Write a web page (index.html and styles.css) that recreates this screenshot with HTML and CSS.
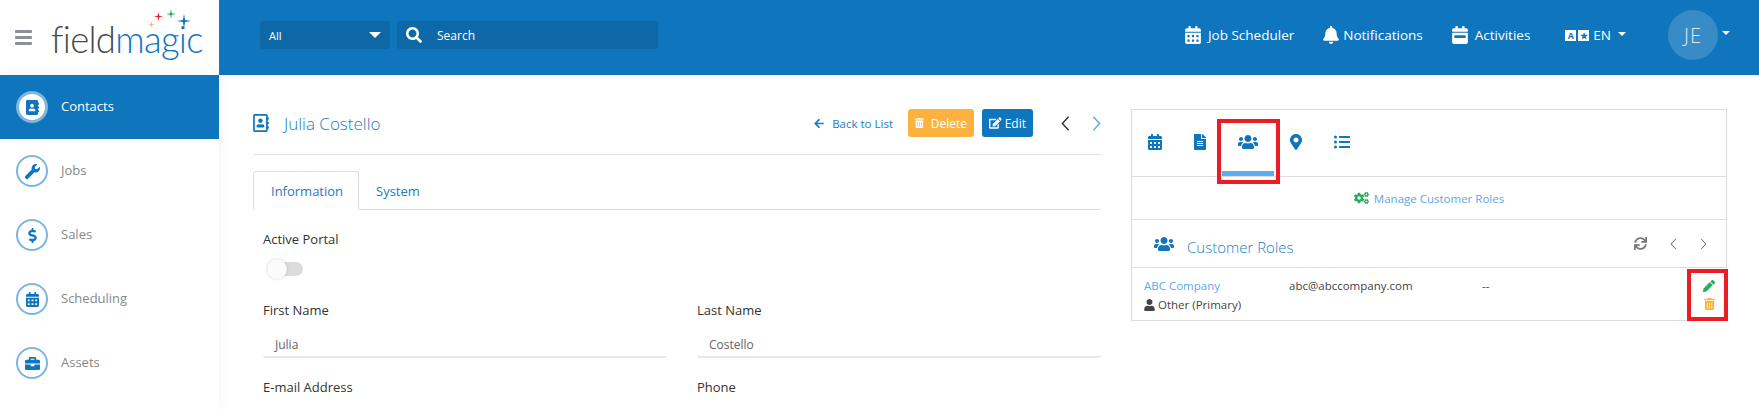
FILE: index.html
```html
<!DOCTYPE html>
<html lang="en">
<head>
<meta charset="utf-8">
<title>Julia Costello - Contacts</title>
<link rel="stylesheet" href="styles.css">
</head>
<body>
<svg class="defs" aria-hidden="true">
<symbol id="i-cal" viewBox="0 0 448 512"><path d="M0 464c0 26.5 21.5 48 48 48h352c26.5 0 48-21.5 48-48V192H0v272zm320-196c0-6.6 5.4-12 12-12h40c6.6 0 12 5.4 12 12v40c0 6.6-5.4 12-12 12h-40c-6.6 0-12-5.4-12-12v-40zm0 128c0-6.6 5.4-12 12-12h40c6.6 0 12 5.4 12 12v40c0 6.6-5.4 12-12 12h-40c-6.6 0-12-5.4-12-12v-40zM192 268c0-6.6 5.4-12 12-12h40c6.6 0 12 5.4 12 12v40c0 6.6-5.4 12-12 12h-40c-6.6 0-12-5.4-12-12v-40zm0 128c0-6.6 5.4-12 12-12h40c6.6 0 12 5.4 12 12v40c0 6.6-5.4 12-12 12h-40c-6.6 0-12-5.4-12-12v-40zM64 268c0-6.6 5.4-12 12-12h40c6.6 0 12 5.4 12 12v40c0 6.6-5.4 12-12 12H76c-6.6 0-12-5.4-12-12v-40zm0 128c0-6.6 5.4-12 12-12h40c6.6 0 12 5.4 12 12v40c0 6.6-5.4 12-12 12H76c-6.6 0-12-5.4-12-12v-40zM400 64h-48V16c0-8.8-7.2-16-16-16h-32c-8.8 0-16 7.2-16 16v48H160V16c0-8.8-7.2-16-16-16h-32c-8.8 0-16 7.2-16 16v48H48C21.5 64 0 85.5 0 112v48h448v-48c0-26.5-21.5-48-48-48z"/></symbol>
<symbol id="i-book" viewBox="0 0 448 512"><path d="M436 160c6.6 0 12-5.4 12-12v-40c0-6.6-5.4-12-12-12h-20V48c0-26.5-21.5-48-48-48H48C21.5 0 0 21.5 0 48v416c0 26.5 21.5 48 48 48h320c26.5 0 48-21.5 48-48v-48h20c6.6 0 12-5.4 12-12v-40c0-6.6-5.4-12-12-12h-20v-64h20c6.6 0 12-5.4 12-12v-40c0-6.6-5.4-12-12-12h-20v-64h20zm-228-32c35.3 0 64 28.7 64 64s-28.7 64-64 64-64-28.7-64-64 28.7-64 64-64zm112 236.8c0 10.6-10 19.2-22.4 19.2H118.4C106 384 96 375.4 96 364.8v-19.2c0-31.8 30.1-57.6 67.2-57.6h5c12.3 5.1 25.7 8 39.8 8s27.6-2.9 39.8-8h5c37.1 0 67.2 25.8 67.2 57.6v19.2z"/></symbol>
<symbol id="i-book-o" viewBox="0 0 448 512"><path d="M436 160c6.6 0 12-5.4 12-12v-40c0-6.6-5.4-12-12-12h-20V48c0-26.5-21.5-48-48-48H48C21.5 0 0 21.5 0 48v416c0 26.5 21.5 48 48 48h320c26.5 0 48-21.5 48-48v-48h20c6.6 0 12-5.4 12-12v-40c0-6.6-5.4-12-12-12h-20v-64h20c6.6 0 12-5.4 12-12v-40c0-6.6-5.4-12-12-12h-20v-64h20zM368 464H48V48h320v416zM208 256c35.3 0 64-28.7 64-64s-28.7-64-64-64-64 28.7-64 64 28.7 64 64 64zm-89.6 128h179.2c12.4 0 22.4-8.6 22.4-19.2v-19.2c0-31.8-30.1-57.6-67.2-57.6-10.8 0-18.7 8-44.8 8-26.9 0-33.4-8-44.8-8-37.1 0-67.2 25.8-67.2 57.6v19.2c0 10.6 10 19.2 22.4 19.2z"/></symbol>
<symbol id="i-wrench" viewBox="0 0 512 512"><path d="M507.73 109.1c-2.24-9.03-13.54-12.09-20.12-5.51l-74.36 74.36-67.88-11.31-11.31-67.88 74.36-74.36c6.62-6.62 3.43-17.9-5.66-20.16-47.38-11.74-99.55.91-136.58 37.93-39.64 39.64-50.55 97.1-34.05 147.2L18.74 402.76c-24.99 24.99-24.99 65.51 0 90.5 24.99 24.99 65.51 24.99 90.5 0l213.21-213.21c50.12 16.71 107.47 5.68 147.37-34.22 37.07-37.07 49.7-89.32 37.91-136.73z"/></symbol>
<symbol id="i-dollar" viewBox="0 0 288 512"><path d="M209.2 233.4l-108-31.6C88.7 198.2 80 186.5 80 173.5c0-16.3 13.2-29.5 29.5-29.5h66.3c12.2 0 24.2 3.7 34.2 10.5 6.1 4.1 14.3 3.1 19.5-2l34.8-34c7.1-6.9 6.1-18.4-1.8-24.5C238 74.8 207.4 64.1 176 64V16c0-8.8-7.2-16-16-16h-32c-8.8 0-16 7.2-16 16v48h-2.5C45.8 64-5.4 118.7.5 183.6c4.2 46.1 39.4 83.6 83.8 96.6l102.5 30c12.5 3.7 21.2 15.3 21.2 28.3 0 16.3-13.2 29.5-29.5 29.5h-66.3C100 368 88 364.3 78 357.5c-6.1-4.1-14.3-3.1-19.5 2l-34.8 34c-7.1 6.9-6.1 18.4 1.8 24.5 24.5 19.2 55.1 29.9 86.5 30v48c0 8.8 7.2 16 16 16h32c8.8 0 16-7.2 16-16v-48.2c46.6-.9 90.3-28.6 105.7-72.7 21.5-61.6-14.6-124.8-72.5-141.7z"/></symbol>
<symbol id="i-case" viewBox="0 0 512 512"><path d="M320 336c0 8.84-7.16 16-16 16h-96c-8.84 0-16-7.16-16-16v-48H0v144c0 25.6 22.4 48 48 48h416c25.6 0 48-22.4 48-48V288H320v48zm144-208h-80V80c0-25.6-22.4-48-48-48H176c-25.6 0-48 22.4-48 48v48H48c-25.6 0-48 22.4-48 48v80h512v-80c0-25.6-22.4-48-48-48zm-144 0H192V96h128v32z"/></symbol>
<symbol id="i-search" viewBox="0 0 512 512"><path d="M505 442.7L405.3 343c-4.5-4.5-10.6-7-17-7H372c27.6-35.3 44-79.7 44-128C416 93.1 322.9 0 208 0S0 93.1 0 208s93.1 208 208 208c48.3 0 92.7-16.4 128-44v16.3c0 6.4 2.5 12.5 7 17l99.7 99.7c9.4 9.4 24.6 9.4 33.9 0l28.3-28.3c9.4-9.4 9.4-24.6.1-34zM208 336c-70.7 0-128-57.2-128-128 0-70.7 57.2-128 128-128 70.7 0 128 57.2 128 128 0 70.7-57.2 128-128 128z"/></symbol>
<symbol id="i-bell" viewBox="0 0 448 512"><path d="M224 512c35.32 0 63.97-28.65 63.97-64H160.03c0 35.35 28.65 64 63.97 64zm215.39-149.71c-19.32-20.76-55.47-51.99-55.47-154.29 0-77.7-54.48-139.9-127.94-155.16V32c0-17.67-14.32-32-31.98-32s-31.98 14.33-31.98 32v20.84C118.56 68.1 64.08 130.3 64.08 208c0 102.3-36.15 133.53-55.47 154.29-6 6.45-8.66 14.16-8.61 21.71.11 16.4 12.98 32 32.1 32h383.8c19.12 0 32-15.6 32.1-32 .05-7.55-2.61-15.27-8.61-21.71z"/></symbol>
<symbol id="i-week" viewBox="0 0 448 512"><path fill-rule="evenodd" d="M12 192h424c6.6 0 12 5.4 12 12v260c0 26.5-21.5 48-48 48H48c-26.5 0-48-21.5-48-48V204c0-6.6 5.4-12 12-12zm52 72v80h320v-80H64zM448 148v-36c0-26.5-21.5-48-48-48h-48V12c0-6.6-5.4-12-12-12h-40c-6.6 0-12 5.4-12 12v52H160V12c0-6.6-5.4-12-12-12h-40c-6.6 0-12 5.4-12 12v52H48C21.5 64 0 85.5 0 112v36c0 6.6 5.4 12 12 12h424c6.6 0 12-5.4 12-12z"/></symbol>
<symbol id="i-file" viewBox="0 0 384 512"><path d="M224 136V0H24C10.7 0 0 10.7 0 24v464c0 13.3 10.7 24 24 24h336c13.3 0 24-10.7 24-24V160H248c-13.2 0-24-10.8-24-24zm64 236c0 6.6-5.4 12-12 12H108c-6.6 0-12-5.4-12-12v-8c0-6.6 5.4-12 12-12h168c6.6 0 12 5.4 12 12v8zm0-64c0 6.6-5.4 12-12 12H108c-6.6 0-12-5.4-12-12v-8c0-6.6 5.4-12 12-12h168c6.6 0 12 5.4 12 12v8zm0-72v8c0 6.6-5.4 12-12 12H108c-6.6 0-12-5.4-12-12v-8c0-6.6 5.4-12 12-12h168c6.6 0 12 5.4 12 12zm96-114.1v6.1H256V0h6.1c6.4 0 12.5 2.5 17 7l97.9 98c4.5 4.5 7 10.6 7 16.9z"/></symbol>
<symbol id="i-users" viewBox="0 0 640 512"><path d="M96 224c35.3 0 64-28.7 64-64s-28.7-64-64-64-64 28.7-64 64 28.7 64 64 64zm448 0c35.3 0 64-28.7 64-64s-28.7-64-64-64-64 28.7-64 64 28.7 64 64 64zm32 32h-64c-17.6 0-33.5 7.1-45.1 18.6 40.3 22.1 68.9 62 75.1 109.4h66c17.7 0 32-14.3 32-32v-32c0-35.3-28.7-64-64-64zm-256 0c61.9 0 112-50.1 112-112S381.9 32 320 32 208 82.1 208 144s50.1 112 112 112zm76.8 32h-8.3c-20.8 10-43.9 16-68.5 16s-47.6-6-68.5-16h-8.3C179.6 288 128 339.6 128 403.2V432c0 26.5 21.5 48 48 48h288c26.5 0 48-21.5 48-48v-28.8c0-63.6-51.6-115.2-115.2-115.2zm-223.7-13.4C161.5 263.1 145.6 256 128 256H64c-35.3 0-64 28.7-64 64v32c0 17.7 14.3 32 32 32h65.9c6.3-47.4 34.9-87.3 75.2-109.4z"/></symbol>
<symbol id="i-marker" viewBox="0 0 384 512"><path d="M172.268 501.67C26.97 291.031 0 269.413 0 192 0 85.961 85.961 0 192 0s192 85.961 192 192c0 77.413-26.97 99.031-172.268 309.67-9.535 13.774-29.93 13.773-39.464 0zM192 272c44.183 0 80-35.817 80-80s-35.817-80-80-80-80 35.817-80 80 35.817 80 80 80z"/></symbol>
<symbol id="i-list" viewBox="0 0 512 512"><path d="M48 48a48 48 0 1 0 48 48 48 48 0 0 0-48-48zm0 160a48 48 0 1 0 48 48 48 48 0 0 0-48-48zm0 160a48 48 0 1 0 48 48 48 48 0 0 0-48-48zm448 16H176a16 16 0 0 0-16 16v32a16 16 0 0 0 16 16h320a16 16 0 0 0 16-16v-32a16 16 0 0 0-16-16zm0-320H176a16 16 0 0 0-16 16v32a16 16 0 0 0 16 16h320a16 16 0 0 0 16-16V80a16 16 0 0 0-16-16zm0 160H176a16 16 0 0 0-16 16v32a16 16 0 0 0 16 16h320a16 16 0 0 0 16-16v-32a16 16 0 0 0-16-16z"/></symbol>
<symbol id="i-cogs" viewBox="0 0 640 512"><path d="M512.1 191l-8.2 14.3c-3 5.3-9.4 7.5-15.1 5.4-11.8-4.4-22.6-10.7-32.1-18.6-4.6-3.8-5.8-10.5-2.8-15.7l8.2-14.3c-6.9-8-12.3-17.3-15.9-27.4h-16.5c-6 0-11.2-4.3-12.2-10.3-2-12-2.1-24.6 0-37.1 1-6 6.2-10.4 12.2-10.4h16.5c3.6-10.1 9-19.4 15.9-27.4l-8.2-14.3c-3-5.2-1.9-11.9 2.8-15.7 9.5-7.9 20.4-14.2 32.1-18.6 5.7-2.1 12.1.1 15.1 5.4l8.2 14.3c10.5-1.9 21.2-1.9 31.7 0L552 6.3c3-5.3 9.4-7.5 15.1-5.4 11.8 4.4 22.6 10.7 32.1 18.6 4.6 3.8 5.8 10.5 2.8 15.7l-8.2 14.3c6.9 8 12.3 17.3 15.9 27.4h16.5c6 0 11.2 4.3 12.2 10.3 2 12 2.1 24.6 0 37.1-1 6-6.2 10.4-12.2 10.4h-16.5c-3.6 10.1-9 19.4-15.9 27.4l8.2 14.3c3 5.2 1.9 11.9-2.8 15.7-9.5 7.9-20.4 14.2-32.1 18.6-5.7 2.1-12.1-.1-15.1-5.4l-8.2-14.3c-10.4 1.9-21.2 1.9-31.7 0zm-10.5-58.8c38.5 29.6 82.4-14.3 52.8-52.8-38.5-29.7-82.4 14.3-52.8 52.8zM386.3 286.1l33.7 16.8c10.1 5.8 14.5 18.1 10.5 29.1-8.9 24.2-26.4 46.4-42.6 65.8-7.4 8.9-20.2 11.1-30.3 5.3l-29.1-16.8c-16 13.7-34.6 24.6-54.9 31.7v33.6c0 11.6-8.3 21.6-19.7 23.6-24.6 4.2-50.4 4.4-75.9 0-11.5-2-20-11.9-20-23.6V418c-20.3-7.2-38.9-18-54.9-31.7L74 403c-10 5.8-22.9 3.6-30.3-5.3-16.2-19.4-33.3-41.6-42.2-65.7-4-10.9.4-23.2 10.5-29.1l33.3-16.8c-3.9-20.9-3.9-42.4 0-63.4L12 205.8c-10.1-5.8-14.6-18.1-10.5-29 8.9-24.2 26-46.4 42.2-65.8 7.4-8.9 20.2-11.1 30.3-5.3l29.1 16.8c16-13.7 34.6-24.6 54.9-31.7V57.1c0-11.5 8.2-21.5 19.6-23.5 24.6-4.2 50.5-4.4 76-.1 11.5 2 20 11.9 20 23.6v33.6c20.3 7.2 38.9 18 54.9 31.7l29.1-16.8c10-5.8 22.9-3.6 30.3 5.3 16.2 19.4 33.2 41.6 42.1 65.8 4 10.9.1 23.2-10 29.1l-33.7 16.8c3.9 21 3.9 42.5 0 63.5zm-117.6 21.1c59.2-77-28.7-164.9-105.7-105.7-59.2 77 28.7 164.9 105.7 105.7zm243.4 182.7l-8.2 14.3c-3 5.3-9.4 7.5-15.1 5.4-11.8-4.4-22.6-10.7-32.1-18.6-4.6-3.8-5.8-10.5-2.8-15.7l8.2-14.3c-6.9-8-12.3-17.3-15.9-27.4h-16.5c-6 0-11.2-4.3-12.2-10.3-2-12-2.1-24.6 0-37.1 1-6 6.2-10.4 12.2-10.4h16.5c3.6-10.1 9-19.4 15.9-27.4l-8.2-14.3c-3-5.2-1.9-11.9 2.8-15.7 9.5-7.9 20.4-14.2 32.1-18.6 5.7-2.1 12.1.1 15.1 5.4l8.2 14.3c10.5-1.9 21.2-1.9 31.7 0l8.2-14.3c3-5.3 9.4-7.5 15.1-5.4 11.8 4.4 22.6 10.7 32.1 18.6 4.6 3.8 5.8 10.5 2.8 15.7l-8.2 14.3c6.9 8 12.3 17.3 15.9 27.4h16.5c6 0 11.2 4.3 12.2 10.3 2 12 2.1 24.6 0 37.1-1 6-6.2 10.4-12.2 10.4h-16.5c-3.6 10.1-9 19.4-15.9 27.4l8.2 14.3c3 5.2 1.9 11.9-2.8 15.7-9.5 7.9-20.4 14.2-32.1 18.6-5.7 2.1-12.1-.1-15.1-5.4l-8.2-14.3c-10.4 1.9-21.2 1.9-31.7 0zM501.6 431c38.5 29.6 82.4-14.3 52.8-52.8-38.5-29.6-82.4 14.3-52.8 52.8z"/></symbol>
<symbol id="i-trash" viewBox="0 0 448 512"><path d="M32 464a48 48 0 0 0 48 48h288a48 48 0 0 0 48-48V128H32zm272-256a16 16 0 0 1 32 0v224a16 16 0 0 1-32 0zm-96 0a16 16 0 0 1 32 0v224a16 16 0 0 1-32 0zm-96 0a16 16 0 0 1 32 0v224a16 16 0 0 1-32 0zM432 32H312l-9.4-18.7A24 24 0 0 0 281.1 0H166.8a23.72 23.72 0 0 0-21.4 13.3L136 32H16A16 16 0 0 0 0 48v32a16 16 0 0 0 16 16h416a16 16 0 0 0 16-16V48a16 16 0 0 0-16-16z"/></symbol>
<symbol id="i-edit" viewBox="0 0 576 512"><path d="M402.6 83.2l90.2 90.2c3.8 3.8 3.8 10 0 13.8L274.4 405.6l-92.8 10.3c-12.4 1.4-22.9-9.1-21.5-21.5l10.3-92.8L388.8 83.2c3.8-3.8 10-3.8 13.8 0zm162-22.9l-48.8-48.8c-15.2-15.2-39.9-15.2-55.2 0l-35.4 35.4c-3.8 3.8-3.8 10 0 13.8l90.2 90.2c3.8 3.8 10 3.8 13.8 0l35.4-35.4c15.2-15.3 15.2-40 0-55.2zM384 346.2V448H64V128h229.8c3.2 0 6.2-1.3 8.5-3.5l40-40c7.6-7.6 2.2-20.5-8.5-20.5H48C21.5 64 0 85.5 0 112v352c0 26.5 21.5 48 48 48h352c26.5 0 48-21.5 48-48V306.2c0-10.7-12.9-16-20.5-8.5l-40 40c-2.2 2.3-3.5 5.3-3.5 8.5z"/></symbol>
<symbol id="i-arrow" viewBox="0 0 448 512"><path d="M257.5 445.1l-22.2 22.2c-9.4 9.4-24.6 9.4-33.9 0L7 273c-9.4-9.4-9.4-24.6 0-33.9L201.4 44.7c9.4-9.4 24.6-9.4 33.9 0l22.2 22.2c9.5 9.5 9.3 25-.4 34.3L136.6 216H424c13.3 0 24 10.7 24 24v32c0 13.3-10.7 24-24 24H136.6l120.5 114.8c9.8 9.3 10 24.8.4 34.3z"/></symbol>
<symbol id="i-sync" viewBox="0 0 512 512"><path d="M440.65 12.57l4 82.77A247.16 247.16 0 0 0 255.83 8C134.73 8 33.91 94.92 12.29 209.82A12 12 0 0 0 24.09 224h49.05a12 12 0 0 0 11.67-9.26 175.91 175.91 0 0 1 317-56.94l-101.46-4.86a12 12 0 0 0-12.57 12v47.41a12 12 0 0 0 12 12H500a12 12 0 0 0 12-12V12a12 12 0 0 0-12-12h-47.37a12 12 0 0 0-11.98 12.57zM255.83 432a175.61 175.61 0 0 1-146-77.8l101.8 4.87a12 12 0 0 0 12.57-12v-47.4a12 12 0 0 0-12-12H12a12 12 0 0 0-12 12V500a12 12 0 0 0 12 12h47.35a12 12 0 0 0 12-12.6l-4.15-82.57A247.17 247.17 0 0 0 255.83 504c121.11 0 221.93-86.92 243.55-201.82a12 12 0 0 0-11.8-14.18h-49.05a12 12 0 0 0-11.67 9.26A175.86 175.86 0 0 1 255.83 432z"/></symbol>
<symbol id="i-pencil" viewBox="0 0 512 512"><path d="M497.9 142.1l-46.1 46.1c-4.7 4.7-12.3 4.7-17 0l-111-111c-4.7-4.7-4.7-12.3 0-17l46.1-46.1c18.7-18.7 49.1-18.7 67.9 0l60.1 60.1c18.8 18.7 18.8 49.1 0 67.9zM284.2 99.8L21.6 362.4.4 483.9c-2.9 16.4 11.4 30.6 27.8 27.8l121.5-21.3 262.6-262.6c4.7-4.7 4.7-12.3 0-17l-111-111c-4.8-4.7-12.4-4.7-17.1 0z"/></symbol>
<symbol id="i-user" viewBox="0 0 448 512"><path d="M224 256c70.7 0 128-57.3 128-128S294.7 0 224 0 96 57.3 96 128s57.3 128 128 128zm89.6 32h-16.7c-22.2 10.2-46.9 16-72.9 16s-50.6-5.8-72.9-16h-16.7C60.2 288 0 348.2 0 422.4V464c0 26.5 21.5 48 48 48h352c26.5 0 48-21.5 48-48v-41.6c0-74.2-60.2-134.4-134.4-134.4z"/></symbol>
<symbol id="i-left" viewBox="0 0 10 18"><path d="M8.5 1.5 1.5 9l7 7.5" fill="none" stroke="currentColor" stroke-width="1.6"/></symbol>
<symbol id="i-right" viewBox="0 0 10 18"><path d="M1.5 1.5 8.5 9l-7 7.5" fill="none" stroke="currentColor" stroke-width="1.6"/></symbol>
<symbol id="i-spark" viewBox="0 0 20 20"><path d="M10 0 11.6 8.4 20 10 11.6 11.6 10 20 8.4 11.6 0 10 8.4 8.4Z"/></symbol>
</svg>

<div class="app">
  <header class="topbar">
    <div class="brand">
      <div class="burger"><span></span><span></span><span></span></div>
      <div class="logo">
        <span class="logo-field">field</span><span class="logo-magic">magic</span>
        <svg class="spark spark-orange"><use href="#i-spark"/></svg>
        <svg class="spark spark-red"><use href="#i-spark"/></svg>
        <svg class="spark spark-green"><use href="#i-spark"/></svg>
        <svg class="spark spark-blue"><use href="#i-spark"/></svg>
      </div>
    </div>
    <div class="header">
      <div class="scope"><span>All</span><i class="caret caret-lg"></i></div>
      <div class="search"><svg class="search-icon"><use href="#i-search"/></svg><span>Search</span></div>
      <nav class="tools">
        <a class="tool tool-jobs"><svg class="tool-icon"><use href="#i-cal"/></svg>Job Scheduler</a>
        <a class="tool tool-notes"><svg class="tool-icon tool-icon-bell"><use href="#i-bell"/></svg>Notifications</a>
        <a class="tool tool-acts"><svg class="tool-icon"><use href="#i-week"/></svg>Activities</a>
        <a class="tool tool-lang"><span class="lang-badge"><b>A</b><b>★</b></span>EN<i class="caret"></i></a>
        <div class="avatar">JE</div>
        <i class="caret caret-avatar"></i>
      </nav>
    </div>
  </header>

  <div class="body">
    <aside class="sidebar">
      <a class="side-item is-active"><span class="side-icon"><svg class="si-book"><use href="#i-book"/></svg></span>Contacts</a>
      <a class="side-item"><span class="side-icon"><svg class="si-wrench"><use href="#i-wrench"/></svg></span>Jobs</a>
      <a class="side-item"><span class="side-icon"><svg class="si-dollar"><use href="#i-dollar"/></svg></span>Sales</a>
      <a class="side-item"><span class="side-icon"><svg class="si-cal"><use href="#i-cal"/></svg></span>Scheduling</a>
      <a class="side-item"><span class="side-icon"><svg class="si-case"><use href="#i-case"/></svg></span>Assets</a>
    </aside>

    <main class="main">
      <section class="record">
        <div class="record-head">
          <svg class="title-icon"><use href="#i-book-o"/></svg>
          <h1 class="title">Julia Costello</h1>
          <div class="actions">
            <a class="back"><svg class="back-icon"><use href="#i-arrow"/></svg>Back to List</a>
            <button class="btn btn-delete"><svg class="btn-icon"><use href="#i-trash"/></svg>Delete</button>
            <button class="btn btn-edit"><svg class="btn-icon btn-icon-edit"><use href="#i-edit"/></svg>Edit</button>
            <svg class="pager pager-prev"><use href="#i-left"/></svg>
            <svg class="pager pager-next"><use href="#i-right"/></svg>
          </div>
        </div>
        <div class="tabs">
          <a class="tab is-active">Information</a>
          <a class="tab">System</a>
        </div>
        <div class="form">
          <div class="field field-wide">
            <label class="label">Active Portal</label>
            <div class="toggle"><span class="knob"></span></div>
          </div>
          <div class="field">
            <label class="label">First Name</label>
            <div class="value">Julia</div>
          </div>
          <div class="field">
            <label class="label">Last Name</label>
            <div class="value">Costello</div>
          </div>
          <div class="field field-next">
            <label class="label">E-mail Address</label>
          </div>
          <div class="field field-next">
            <label class="label">Phone</label>
          </div>
        </div>
      </section>

      <section class="panel">
        <div class="panel-tabs">
          <a class="ptab ptab-cal"><svg><use href="#i-cal"/></svg></a>
          <a class="ptab ptab-file"><svg><use href="#i-file"/></svg></a>
          <a class="ptab ptab-users is-active"><svg><use href="#i-users"/></svg></a>
          <a class="ptab ptab-marker"><svg><use href="#i-marker"/></svg></a>
          <a class="ptab ptab-list"><svg><use href="#i-list"/></svg></a>
        </div>
        <div class="manage"><svg class="manage-icon"><use href="#i-cogs"/></svg>Manage Customer Roles</div>
        <div class="roles-head">
          <svg class="roles-icon"><use href="#i-users"/></svg>
          <h2 class="roles-title">Customer Roles</h2>
          <div class="roles-tools">
            <svg class="rt-sync"><use href="#i-sync"/></svg>
            <svg class="rt-chev"><use href="#i-left"/></svg>
            <svg class="rt-chev"><use href="#i-right"/></svg>
          </div>
        </div>
        <div class="role-row">
          <div class="role-main">
            <a class="role-name">ABC Company</a>
            <div class="role-type"><svg class="role-user"><use href="#i-user"/></svg>Other (Primary)</div>
          </div>
          <div class="role-mail">abc@abccompany.com</div>
          <div class="role-phone">--</div>
          <div class="role-actions">
            <svg class="ra-pencil"><use href="#i-pencil"/></svg>
            <svg class="ra-trash"><use href="#i-trash"/></svg>
          </div>
        </div>
        <div class="mark mark-tab"></div>
        <div class="mark mark-actions"></div>
      </section>
    </main>
  </div>
</div>
</body>
</html>
```

FILE: styles.css
```css
* { box-sizing: border-box; }
html, body { margin: 0; padding: 0; height: 100%; overflow: hidden; background: #fff; }
body { font-family: "Open Sans", "Liberation Sans", sans-serif; font-size: 12px; color: #333; }
.defs { position: absolute; width: 0; height: 0; }
svg { fill: currentColor; display: block; }
a { color: inherit; text-decoration: none; }

.app { display: flex; flex-direction: column; height: 409px; overflow: hidden; }

/* top bar */
.topbar { display: flex; height: 75px; flex: none; }
.brand { width: 219px; flex: none; background: #fff; display: flex; align-items: center; padding-left: 15px; }
.burger { width: 17px; display: flex; flex-direction: column; gap: 3px; }
.burger span { height: 3px; background: #8b9196; border-radius: 1px; }
.logo { position: relative; margin-left: 19px; font-family: "Lato", sans-serif; font-weight: 300; font-size: 36.5px; line-height: 40px; letter-spacing: -.7px; margin-top: 2px; white-space: nowrap; }
.logo-field { color: #4a4a4a; }
.logo-magic { color: #0f75bd; }
.spark { position: absolute; }
.spark-orange { width: 7px; height: 7px; left: 97px; top: 2px; fill: #fbb040; }
.spark-red { width: 9px; height: 9px; left: 103px; top: -7px; fill: #ed1c24; }
.spark-green { width: 10px; height: 10px; left: 115px; top: -10px; fill: #1fab5e; }
.spark-blue { width: 14px; height: 14px; left: 126px; top: -5px; fill: #0f75bd; }

.header { flex: 1; background: #0f75bd; display: flex; align-items: flex-start; padding: 21px 0 0 41px; color: #fff; }
.scope { width: 130px; height: 28px; background: #0e68a8; border-radius: 3px; display: flex; align-items: center; justify-content: space-between; padding: 0 9px 0 9px; font-size: 11px; }
.search { width: 261px; height: 28px; margin-left: 7px; background: #0e68a8; border-radius: 3px; display: flex; align-items: center; padding-left: 9px; font-size: 12px; }
.search-icon { width: 16px; height: 16px; margin-right: 15px; }
.caret { display: inline-block; width: 0; height: 0; border-left: 4px solid transparent; border-right: 4px solid transparent; border-top: 4px solid #fff; }
.caret-lg { border-left-width: 6px; border-right-width: 6px; border-top-width: 6px; }

.tools { margin-left: auto; display: flex; align-items: flex-start; padding-right: 29px; }
.tool { display: flex; align-items: center; height: 30px; margin-top: -1px; font-size: 13.5px; white-space: nowrap; }
.tool-icon { width: 16px; height: 18px; margin-right: 7px; }
.tool-icon-bell { margin-right: 4px; }
.tool-jobs { margin-right: 29px; }
.tool-notes { margin-right: 29px; }
.tool-acts { margin-right: 35px; }
.tool-lang { margin-right: 42px; }
.tool-lang .caret { margin-left: 7px; margin-top: -2px; }
.lang-badge { display: flex; gap: 2px; margin-right: 4px; }
.lang-badge b { width: 11px; height: 11px; background: #fff; color: #0f75bd; font-size: 9px; line-height: 11px; font-weight: 700; text-align: center; }
.avatar { margin-top: -11px; width: 50px; height: 50px; border-radius: 50%; background: rgba(255,255,255,.17); color: #dfeaf4; font-size: 20px; letter-spacing: 1px; font-weight: 300; display: flex; align-items: center; justify-content: center; flex: none; }
.caret-avatar { margin: 10px 0 0 4px; }

/* main layout */
.body { display: flex; flex: 1; min-height: 0; }
.sidebar { width: 219px; flex: none; background: #fff; box-shadow: 0 0 12px rgba(0,0,0,.06); position: relative; }
.side-item { height: 64px; display: flex; align-items: center; padding: 0 0 2px 16px; font-size: 13px; color: #888; }
.side-item.is-active { background: #0f75bd; color: #fff; }
.side-icon { width: 32px; height: 32px; margin: 2px 13px 0 0; border-radius: 50%; border: 2px solid #7cb5de; background: #fff; color: #0f75bd; display: flex; align-items: center; justify-content: center; flex: none; }
.is-active .side-icon { border-color: #7fb6de; border-width: 3px; }
.si-book { width: 13px; height: 15px; }
.si-wrench { width: 15px; height: 15px; }
.si-dollar { width: 9px; height: 15px; }
.si-cal { width: 13px; height: 15px; }
.si-case { width: 15px; height: 15px; }

.main { flex: 1; display: flex; gap: 30px; padding: 34px 32px 0 34px; min-width: 0; }
.record { width: 848px; flex: none; }
.record-head { display: flex; align-items: center; height: 46px; padding-bottom: 17px; border-bottom: 1px solid #e2e2e2; }
.title-icon { width: 16px; height: 18px; color: #0f75bd; margin-right: 15px; }
.title { margin: 0; font-size: 17px; font-weight: 300; color: #1c7cc0; }
.actions { margin-left: auto; display: flex; align-items: center; }
.back { display: flex; align-items: center; color: #1c7cc0; font-size: 11.5px; margin-right: 15px; }
.back-icon { width: 10px; height: 11px; margin-right: 8px; }
.btn { height: 28px; border: 0; border-radius: 3px; color: #fff; font: inherit; font-size: 12px; display: flex; align-items: center; padding: 0 7px; }
.btn-delete { background: #fdb240; width: 66px; margin-right: 8px; }
.btn-edit { background: #0f75bd; width: 51px; margin-right: 28px; }
.btn-icon { width: 10px; height: 12px; margin-right: 7px; }
.btn-icon-edit { width: 14px; margin-right: 3px; }
.pager { width: 9px; height: 17px; }
.pager-prev { color: #333; margin-right: 22px; }
.pager-next { color: #5ba9ea; }

.tabs { display: flex; margin-top: 16px; height: 39px; border-bottom: 1px solid #ddd; }
.tab { padding: 0 17px; display: flex; align-items: center; color: #1c7cc0; font-size: 13px; height: 39px; }
.tab.is-active { width: 106px; border: 1px solid #ddd; border-bottom: 1px solid #fff; border-radius: 3px 3px 0 0; }

.form { display: grid; grid-template-columns: 404px 404px; column-gap: 30px; padding-left: 10px; }
.field-wide { grid-column: 1 / -1; }
.label { display: block; font-size: 13px; color: #333; line-height: 18px; }
.field { padding-top: 25px; }
.field-wide { padding-top: 20px; }
.field-next { padding-top: 20px; }
.toggle { margin: 14px 0 0 4px; width: 36px; height: 14px; background: #dcdcdc; border-radius: 7px; position: relative; }
.knob { position: absolute; left: 0; top: -3px; width: 20px; height: 20px; border-radius: 50%; background: #fbfbfb; box-shadow: 0 0 3px rgba(0,0,0,.18); }
.value { margin-top: 13px; height: 26px; padding: 4px 12px 0; font-size: 12px; color: #666; border-bottom: 2px solid #e8e8e8; border-radius: 0 0 3px 3px; }

/* panel */
.panel { width: 596px; flex: none; height: 212px; border: 1px solid #ddd; position: relative; }
.panel-tabs { display: flex; height: 67px; border-bottom: 1px solid #ddd; position: relative; }
.ptab { position: absolute; top: 24px; color: #0f75bd; }
.ptab svg { height: 16px; }
.ptab-cal { left: 16px; } .ptab-cal svg { width: 14px; }
.ptab-file { left: 62px; } .ptab-file svg { width: 12px; }
.ptab-users { left: 106px; } .ptab-users svg { width: 20px; }
.ptab-marker { left: 158px; } .ptab-marker svg { width: 12px; }
.ptab-list { left: 202px; } .ptab-list svg { width: 16px; }
.ptab-users::after { content: ""; position: absolute; left: -16px; top: 37px; width: 52px; height: 5px; background: #5aaeef; }
.manage { height: 43px; border-bottom: 1px solid #ddd; display: flex; align-items: center; justify-content: center; color: #5ba9ea; font-size: 11.5px; }
.manage-icon { width: 15px; height: 12px; color: #27ae60; margin-right: 5px; }
.roles-head { height: 48px; border-bottom: 1px solid #ddd; display: flex; align-items: center; padding-left: 22px; }
.roles-icon { width: 20px; height: 16px; color: #0f75bd; margin-right: 13px; }
.roles-title { margin: 6px 0 0; font-size: 15px; font-weight: 300; color: #1c7cc0; }
.roles-tools { margin-left: auto; display: flex; align-items: center; color: #777; padding-right: 19px; }
.rt-sync { width: 13px; height: 13px; margin-right: 23px; }
.rt-chev { width: 7px; height: 12px; }
.rt-chev + .rt-chev { margin-left: 23px; }
.role-row { display: flex; padding: 9px 0 0 12px; font-size: 11.5px; position: relative; }
.role-main { width: 145px; }
.role-name { color: #5ba9ea; display: block; line-height: 18px; }
.role-type { display: flex; align-items: center; line-height: 19px; color: #444; }
.role-user { width: 11px; height: 12px; margin-right: 3px; }
.role-mail { width: 193px; line-height: 18px; color: #444; }
.role-phone { line-height: 18px; color: #444; }
.role-actions { margin-left: auto; padding-right: 11px; display: flex; flex-direction: column; align-items: flex-end; margin-top: 3px; }
.ra-pencil { width: 12px; height: 12px; color: #27ae60; }
.ra-trash { width: 11px; height: 12px; color: #fdb240; margin-top: 6px; }
.mark { position: absolute; border: 4px solid #ed1c24; pointer-events: none; }
.mark-tab { left: 85px; top: 9px; width: 63px; height: 65px; }
.mark-actions { left: 555px; top: 159px; width: 41px; height: 52px; }
```
